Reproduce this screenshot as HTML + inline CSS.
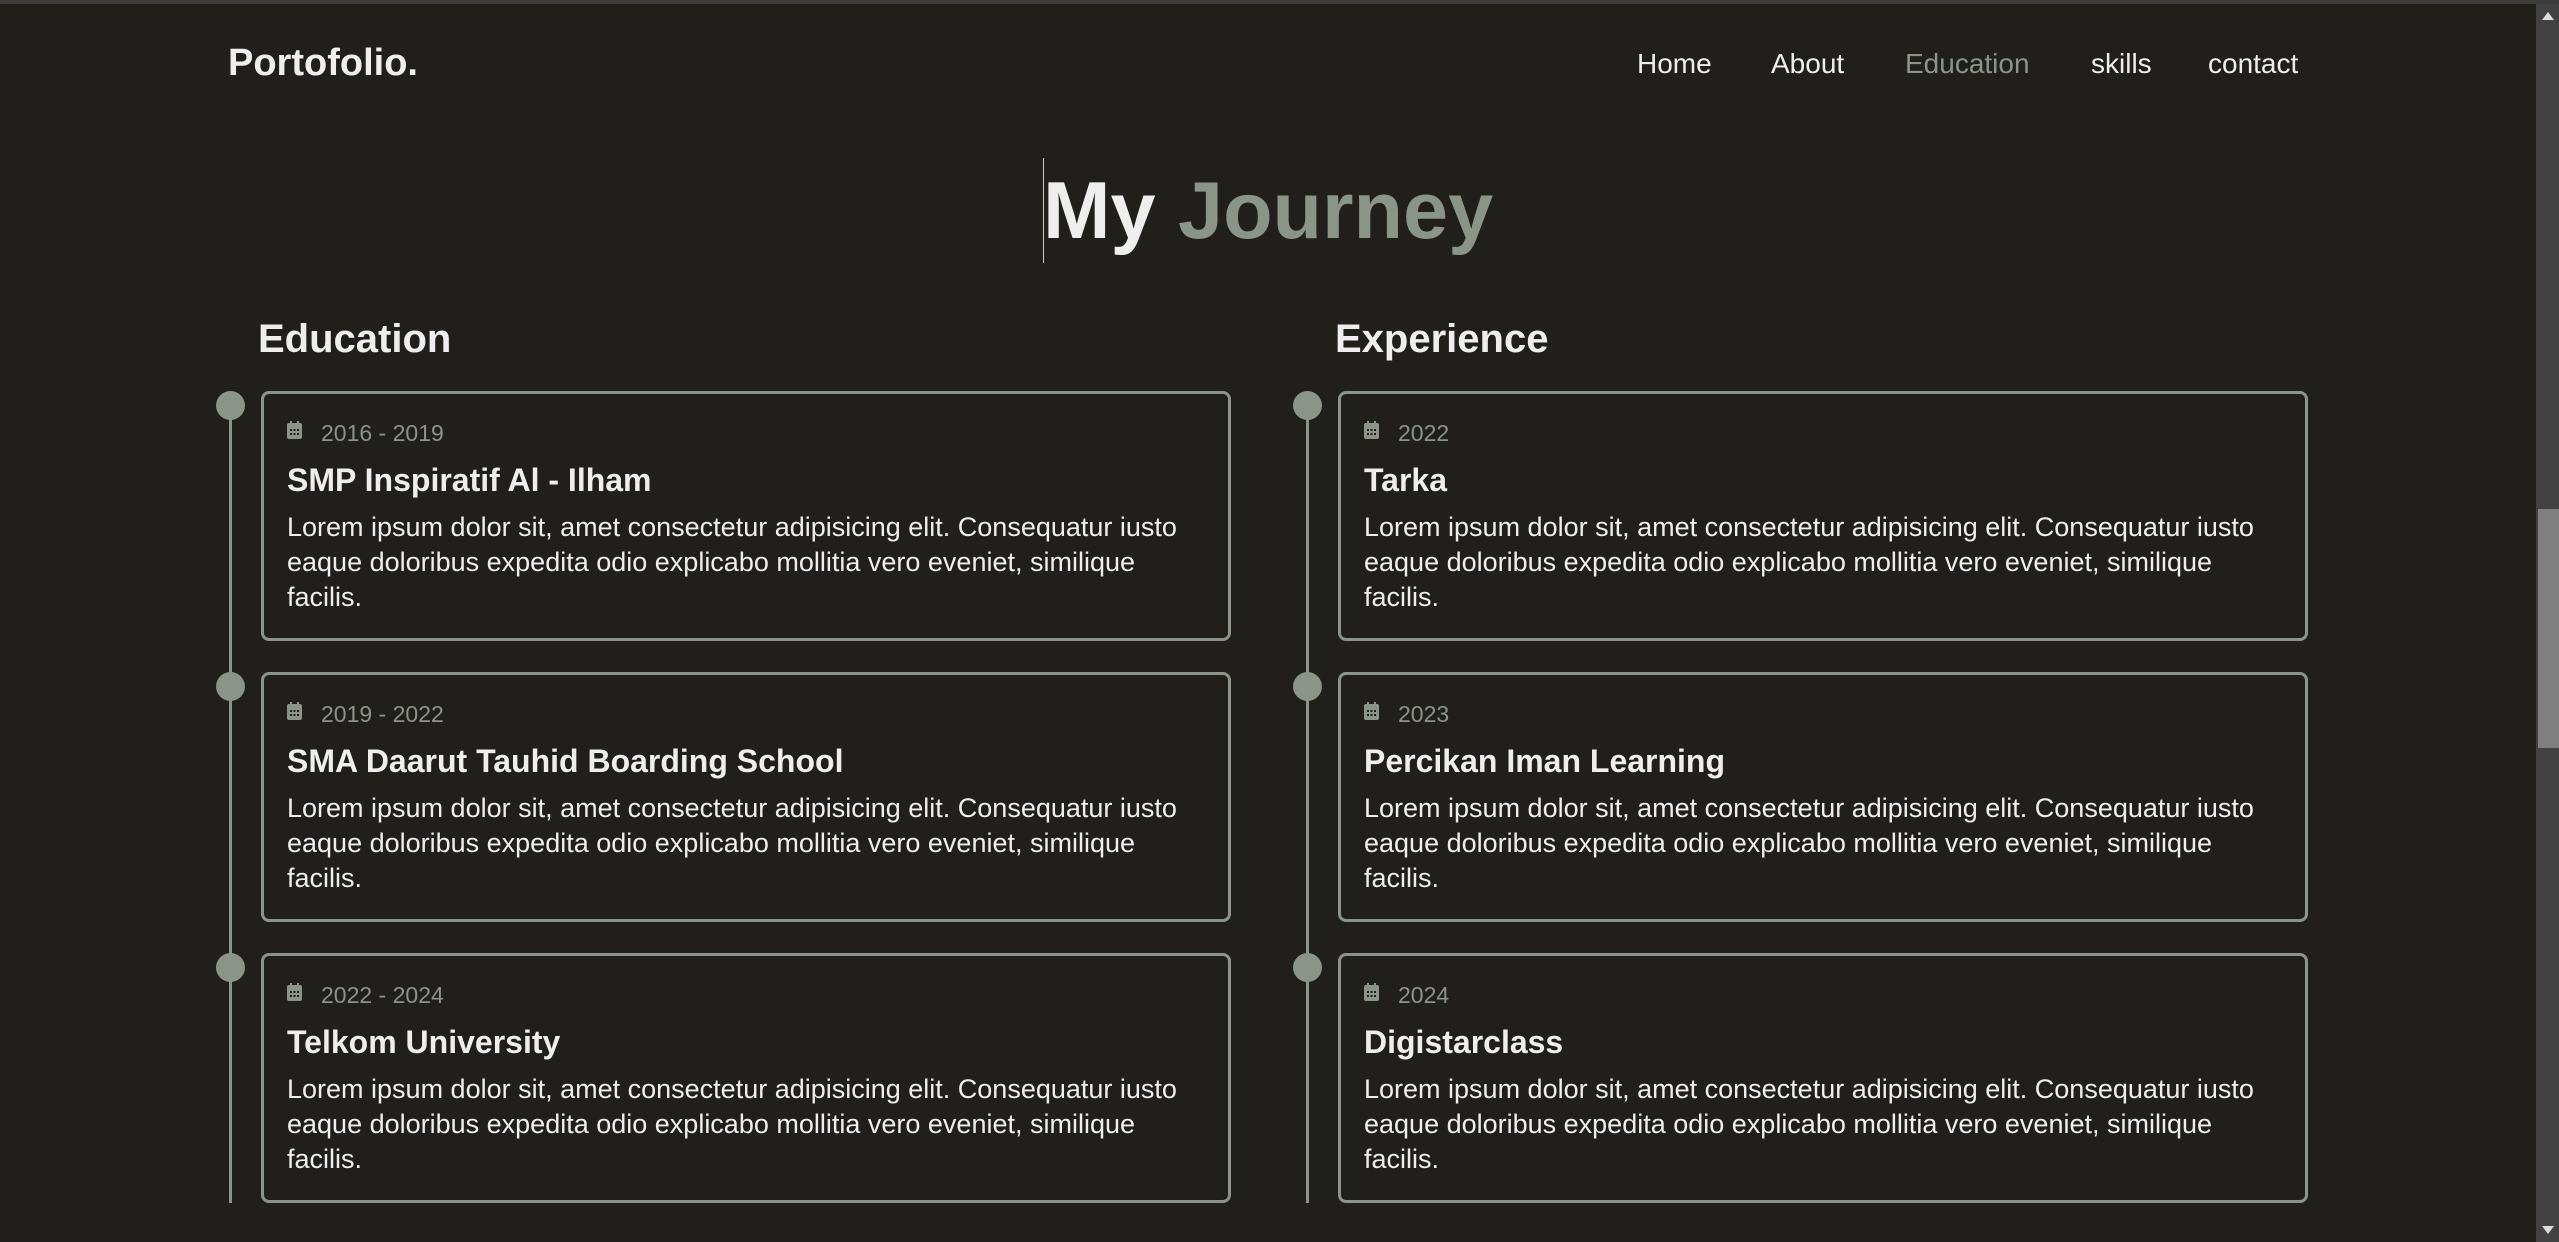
<!DOCTYPE html>
<html><head><meta charset="utf-8"><style>
*{margin:0;padding:0;box-sizing:border-box}
html,body{width:2559px;height:1242px;overflow:hidden;background:#201f1c;font-family:"Liberation Sans",sans-serif;color:#eeeeee}
.abs{position:absolute;white-space:nowrap}
#topbar{position:absolute;left:0;top:0;width:2559px;height:4px;background:#3d3d3d}
#sb{position:absolute;left:2536px;top:4px;width:23px;height:1238px;background:#424242}
#thumb{position:absolute;left:2538px;top:509px;width:21px;height:239px;background:#808080}
.logo{left:228px;top:42px;font-size:38px;font-weight:bold}
.nav{top:48px;font-size:28px}
.title{left:1043px;top:161px;font-size:81px;font-weight:bold;line-height:100px}
.h2{top:317px;font-size:40px;font-weight:bold}
.line{position:absolute;width:3px;background:#8a9488;top:392px;height:811px}
.dot{position:absolute;width:29px;height:29px;border-radius:50%;background:#8a9488}
.card{position:absolute;width:970px;height:250px;border:3px solid #8a9488;border-radius:8px}
.date{position:absolute;left:57px;top:26px;font-size:23px;color:#8a9488;white-space:nowrap}
.ic{position:absolute;left:23px;top:27px}
.ct{position:absolute;left:23px;top:68px;font-size:32px;font-weight:bold;white-space:nowrap}
.cp{position:absolute;left:23px;top:116px;font-size:27px;line-height:35px;white-space:nowrap}
</style></head><body>
<div id="topbar"></div>
<div id="sb"></div><div id="thumb"></div>
<div class="abs" style="left:2542px;top:12px;width:0;height:0;border-left:6px solid transparent;border-right:6px solid transparent;border-bottom:8px solid #ddd"></div>
<div class="abs" style="left:2542px;top:1226px;width:0;height:0;border-left:6px solid transparent;border-right:6px solid transparent;border-top:8px solid #ddd"></div>

<div class="abs logo">Portofolio.</div>
<div class="abs nav" style="left:1637px">Home</div>
<div class="abs nav" style="left:1771px">About</div>
<div class="abs nav" style="left:1905px;color:#8a9488">Education</div>
<div class="abs nav" style="left:2091px">skills</div>
<div class="abs nav" style="left:2208px">contact</div>

<div class="abs" style="left:1043px;top:158px;width:1px;height:105px;background:#ccc"></div>
<div class="abs title">My <span style="color:#8a9488">Journey</span></div>

<div class="abs h2" style="left:258px">Education</div>
<div class="abs h2" style="left:1335px">Experience</div>

<div class="line" style="left:229px"></div>
<div class="line" style="left:1306px"></div>

<svg width="0" height="0" style="position:absolute"><defs><symbol id="cal" viewBox="0 0 15 18"><rect x="3" y="0" width="2" height="4" fill="#8a9488"/><rect x="10" y="0" width="2" height="4" fill="#8a9488"/><rect x="0" y="2" width="15" height="16" rx="2" fill="#8a9488"/><g fill="#201f1c"><rect x="3" y="8" width="2" height="2"/><rect x="6.5" y="8" width="2" height="2"/><rect x="10" y="8" width="2" height="2"/><rect x="3" y="12" width="2" height="2"/><rect x="6.5" y="12" width="2" height="2"/><rect x="10" y="12" width="2" height="2"/></g></symbol></defs></svg>

<!-- left cards -->
<div class="dot" style="left:216px;top:391px"></div>
<div class="card" style="left:261px;top:391px">
<svg class="ic" width="15" height="18"><use href="#cal"/></svg>
<div class="date">2016 - 2019</div>
<div class="ct">SMP Inspiratif Al - Ilham</div>
<div class="cp">Lorem ipsum dolor sit, amet consectetur adipisicing elit. Consequatur iusto<br>eaque doloribus expedita odio explicabo mollitia vero eveniet, similique<br>facilis.</div>
</div>
<div class="dot" style="left:216px;top:672px"></div>
<div class="card" style="left:261px;top:672px">
<svg class="ic" width="15" height="18"><use href="#cal"/></svg>
<div class="date">2019 - 2022</div>
<div class="ct">SMA Daarut Tauhid Boarding School</div>
<div class="cp">Lorem ipsum dolor sit, amet consectetur adipisicing elit. Consequatur iusto<br>eaque doloribus expedita odio explicabo mollitia vero eveniet, similique<br>facilis.</div>
</div>
<div class="dot" style="left:216px;top:953px"></div>
<div class="card" style="left:261px;top:953px">
<svg class="ic" width="15" height="18"><use href="#cal"/></svg>
<div class="date">2022 - 2024</div>
<div class="ct">Telkom University</div>
<div class="cp">Lorem ipsum dolor sit, amet consectetur adipisicing elit. Consequatur iusto<br>eaque doloribus expedita odio explicabo mollitia vero eveniet, similique<br>facilis.</div>
</div>

<!-- right cards -->
<div class="dot" style="left:1293px;top:391px"></div>
<div class="card" style="left:1338px;top:391px">
<svg class="ic" width="15" height="18"><use href="#cal"/></svg>
<div class="date">2022</div>
<div class="ct">Tarka</div>
<div class="cp">Lorem ipsum dolor sit, amet consectetur adipisicing elit. Consequatur iusto<br>eaque doloribus expedita odio explicabo mollitia vero eveniet, similique<br>facilis.</div>
</div>
<div class="dot" style="left:1293px;top:672px"></div>
<div class="card" style="left:1338px;top:672px">
<svg class="ic" width="15" height="18"><use href="#cal"/></svg>
<div class="date">2023</div>
<div class="ct">Percikan Iman Learning</div>
<div class="cp">Lorem ipsum dolor sit, amet consectetur adipisicing elit. Consequatur iusto<br>eaque doloribus expedita odio explicabo mollitia vero eveniet, similique<br>facilis.</div>
</div>
<div class="dot" style="left:1293px;top:953px"></div>
<div class="card" style="left:1338px;top:953px">
<svg class="ic" width="15" height="18"><use href="#cal"/></svg>
<div class="date">2024</div>
<div class="ct">Digistarclass</div>
<div class="cp">Lorem ipsum dolor sit, amet consectetur adipisicing elit. Consequatur iusto<br>eaque doloribus expedita odio explicabo mollitia vero eveniet, similique<br>facilis.</div>
</div>
</body></html>
